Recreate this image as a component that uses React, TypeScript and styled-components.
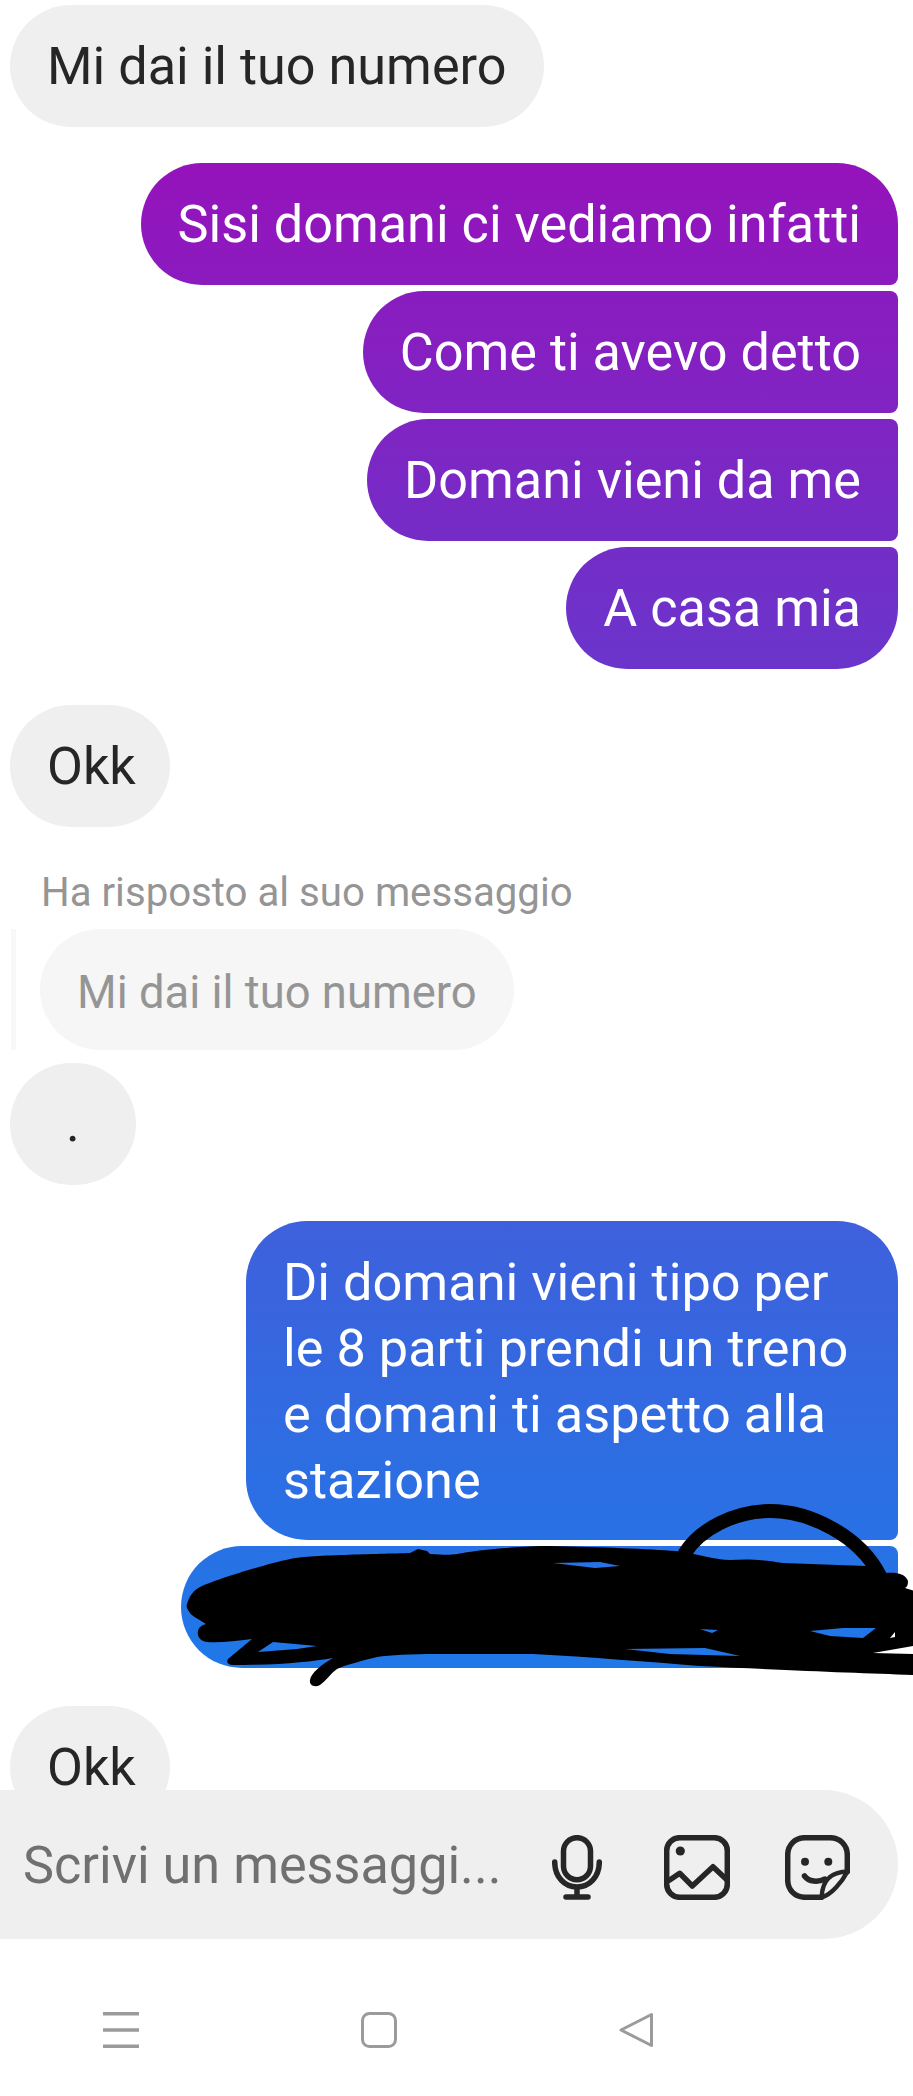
import React from "react";
import styled, { createGlobalStyle } from "styled-components";

const Global = createGlobalStyle`
  html, body { margin: 0; padding: 0; background: #fff; }
  body { font-family: Roboto, "Liberation Sans", sans-serif; }
`;

const Screen = styled.div`
  width: 913px;
  height: 2096px;
  overflow: hidden;
  display: flex;
  flex-direction: column;
  background: #fff;
`;

const Thread = styled.div`
  height: 1790px;
  flex: none;
  overflow: hidden;
  padding: 5px 15px 0 10px;
  box-sizing: border-box;
  display: flex;
  flex-direction: column;
  position: relative;
`;

const Bubble = styled.div<{ $mine?: boolean; $gap?: number; $join?: "first" | "mid" | "last" | "only" }>`
  flex: none;
  box-sizing: border-box;
  height: 122px;
  padding: 2px 37px 0;
  display: flex;
  align-items: center;
  font-size: 52.2px;
  line-height: 66px;
  white-space: nowrap;
  align-self: ${(p) => (p.$mine ? "flex-end" : "flex-start")};
  margin-top: ${(p) => p.$gap ?? 0}px;
  border-radius: ${(p) =>
    p.$join === "first" ? "61px 61px 8px 61px" : p.$join === "mid" ? "61px 8px 8px 61px" : p.$join === "last" ? "61px 8px 61px 61px" : "61px"};
  color: ${(p) => (p.$mine ? "#fff" : "#262626")};
  background: ${(p) =>
    p.$mine
      ? "linear-gradient(180deg, #9513bb 163px, #6a35cb 668px, #3f60dc 1220px, #1f78e8 1666px) fixed"
      : "#efefef"};
`;

const ShortBubble = styled(Bubble)`
  width: 160px;
  padding: 2px 0 0 37px;
  line-height: 46px;
`;

const DotBubble = styled(Bubble)`
  width: 126px;
  padding: 0;
  justify-content: center;
`;

const BlockBubble = styled(Bubble)`
  width: 652px;
  height: 319px;
  display: block;
  padding: 28px 37px 0;
  font-size: 52.3px;
`;

const RedactedBubble = styled(Bubble)`
  width: 717px;
`;

const Line = styled.div``;

const ReplyLabel = styled.div`
  margin: 39px 0 9px 31px;
  font-size: 40.2px;
  line-height: 54px;
  color: #959595;
  white-space: nowrap;
`;

const ReplyRow = styled.div`
  display: flex;
  gap: 24px;
  margin-left: 1px;
`;

const ReplyBar = styled.div`
  width: 5px;
  flex: none;
  background: #f8f8f8;
`;

const ReplyBubble = styled.div`
  height: 121px;
  box-sizing: border-box;
  padding: 5px 37px 0;
  display: flex;
  align-items: center;
  border-radius: 61px;
  background: #f6f6f6;
  color: #959595;
  font-size: 45.4px;
  white-space: nowrap;
`;

const ScribbleRow = styled.div`
  position: relative;
  align-self: flex-end;
  margin-top: 6px;
`;

const Scribble = styled.svg`
  position: absolute;
  left: -181px;
  top: -55px;
  width: 913px;
  height: 200px;
  overflow: visible;
  pointer-events: none;
`;

const Composer = styled.div`
  flex: none;
  width: 898px;
  height: 149px;
  box-sizing: border-box;
  background: #efefef;
  border-radius: 0 75px 75px 0;
  display: flex;
  align-items: center;
  padding-left: 23px;
`;

const Placeholder = styled.div`
  width: 529px;
  flex: none;
  padding-top: 2px;
  font-size: 52.2px;
  color: #707070;
  white-space: nowrap;
  overflow: hidden;
`;

const Icons = styled.div`
  display: flex;
  align-items: center;
  gap: 55px;
  padding-top: 6px;
  color: #262626;
`;

const MicSvg = styled.svg`
  margin-right: 7px;
`;

const NavBar = styled.div`
  flex: 1;
  display: flex;
  align-items: flex-start;
  padding: 73px 0 0 103px;
  gap: 222px;
  color: #9b9b9b;
`;

const NavMenu = () => (
  <svg width="36" height="36" viewBox="0 0 36 36" fill="none" stroke="currentColor" strokeWidth="3.4">
    <path d="M0 1.7H36M0 18H36M0 34.3H36" />
  </svg>
);

const NavHome = () => (
  <svg width="36" height="36" viewBox="0 0 36 36" fill="none" stroke="currentColor" strokeWidth="3">
    <rect x="1.5" y="1.5" width="33" height="33" rx="7" />
  </svg>
);

const NavBack = () => (
  <svg width="35" height="36" viewBox="0 0 35 36" fill="none" stroke="currentColor" strokeWidth="3" strokeLinejoin="round">
    <path d="M32.5 2.5V33.5L2 18Z" />
  </svg>
);

const Mic = () => (
  <MicSvg width="50" height="65" viewBox="0 0 50 65" fill="none" stroke="currentColor" strokeWidth="5.5" strokeLinecap="round" strokeLinejoin="round">
    <rect x="11.5" y="2.7" width="27" height="42" rx="13.5" />
    <path d="M2.7 27c0 15 10 25 22.3 25s22.3-10 22.3-25M25 52v10M14 62h22" />
  </MicSvg>
);

const ImageIcon = () => (
  <svg width="66" height="65" viewBox="0 0 66 65" fill="none" stroke="currentColor" strokeWidth="5.5" strokeLinecap="round" strokeLinejoin="round">
    <rect x="2.7" y="2.7" width="60.6" height="59.6" rx="13" />
    <circle cx="16.3" cy="16" r="4.6" fill="currentColor" stroke="none" />
    <path d="M5.7 45L15.7 38.3 28.3 51 49 31.7 62 44" />
  </svg>
);

const StickerIcon = () => (
  <svg width="65" height="65" viewBox="0 0 65 65" fill="none" stroke="currentColor" strokeWidth="5.5" strokeLinecap="round" strokeLinejoin="round">
    <path d="M36.7 62.3H20C10 62.3 2.7 55 2.7 45V20C2.7 10 10 2.7 20 2.7H45C55 2.7 62.3 10 62.3 20V36.7" />
    <circle cx="20" cy="26.7" r="4" fill="currentColor" stroke="none" />
    <circle cx="43.3" cy="26.7" r="4" fill="currentColor" stroke="none" />
    <path d="M19.5 41C24 47 33 47.5 40 44" />
    <path d="M62.3 36.7C50 36.7 37 42 36.7 62.3 46 60 57 47 62.3 36.7Z" strokeWidth="4.5" />
  </svg>
);

const massPoints =
  "M187 1603C190 1594 193 1590 200 1586C215 1579 262 1564 290 1558C305 1554 380 1553 410 1552L418 1548 427 1550 430 1553C445 1554 450 1554 457 1553C475 1549 520 1545 550 1545C600 1546 650 1548 676 1550C700 1553 715 1559 730 1559C745 1558 760 1558 783 1562L866 1565C875 1567 880 1571 886 1572C895 1571 905 1572 908 1580C908 1584 907 1586 905 1587L915 1590V1674C860 1672 800 1670 700 1665C650 1661 590 1656 533 1653H437C410 1653 390 1654 377 1656C365 1659 345 1664 337 1668C330 1673 326 1680 320 1684 314 1687 309 1684 310 1679 311 1672 322 1663 333 1657C310 1661 280 1664 233 1664 228 1664 226 1661 228 1658L252 1638C235 1640 220 1642 207 1641 199 1640 197 1634 198 1630 199 1626 202 1624 206 1623 198 1618 192 1615 190 1612 187 1608 186 1606 187 1603Z";
const holes = [
  "M258 1651L273 1641 317 1645 297 1648Z",
  "M553 1562L600 1561 620 1565 595 1567Z",
  "M700 1628L718 1629 712 1632Z",
  "M810 1630L843 1627 876 1627 863 1637 830 1635Z",
  "M625 1648L705 1647 740 1655 670 1653Z",
  "M890 1637L895 1631 895 1636Z",
].join("");

export default function App() {
  return (
    <Screen>
      <Global />
      <Thread>
        <Bubble>Mi dai il tuo numero</Bubble>
        <Bubble $mine $gap={36} $join="first">Sisi domani ci vediamo infatti</Bubble>
        <Bubble $mine $gap={6} $join="mid">Come ti avevo detto</Bubble>
        <Bubble $mine $gap={6} $join="mid">Domani vieni da me</Bubble>
        <Bubble $mine $gap={6} $join="last">A casa mia</Bubble>
        <ShortBubble $gap={36}>Okk</ShortBubble>
        <ReplyLabel>Ha risposto al suo messaggio</ReplyLabel>
        <ReplyRow>
          <ReplyBar />
          <ReplyBubble>Mi dai il tuo numero</ReplyBubble>
        </ReplyRow>
        <DotBubble $gap={13}>.</DotBubble>
        <BlockBubble $mine $gap={36} $join="first">
          <Line>Di domani vieni tipo per</Line>
          <Line>le 8 parti prendi un treno</Line>
          <Line>e domani ti aspetto alla</Line>
          <Line>stazione</Line>
        </BlockBubble>
        <ScribbleRow>
          <RedactedBubble $mine $join="last" />
          <Scribble viewBox="0 1490 913 200">
            <path d="M685 1552C700 1528 735 1510 770 1510C810 1510 860 1535 880 1575" fill="none" stroke="#000" strokeWidth="14" strokeLinecap="round" />
            <path d={massPoints + holes} fill="#000" fillRule="evenodd" />
            <path d="M873 1652L913 1645V1653Z" fill="#fff" />
          </Scribble>
        </ScribbleRow>
        <ShortBubble $gap={38}>Okk</ShortBubble>
      </Thread>
      <Composer>
        <Placeholder>Scrivi un messaggi...</Placeholder>
        <Icons>
          <Mic />
          <ImageIcon />
          <StickerIcon />
        </Icons>
      </Composer>
      <NavBar>
        <NavMenu />
        <NavHome />
        <NavBack />
      </NavBar>
    </Screen>
  );
}
